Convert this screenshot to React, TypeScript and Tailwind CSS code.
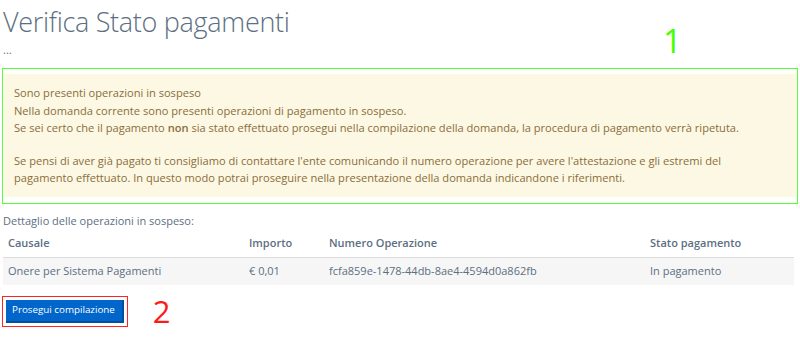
import React from 'react';

const rows = [
  {
    causale: 'Onere per Sistema Pagamenti',
    importo: '€ 0,01',
    numero: 'fcfa859e-1478-44db-8ae4-4594d0a862fb',
    stato: 'In pagamento',
  },
];

const App: React.FC = () => {
  return (
    <div className="relative w-[800px] h-[347px] bg-white font-['Open_Sans',sans-serif] text-[#5c6f82] overflow-hidden">
      {/* annotation 1 */}
      <span className="absolute left-[663px] top-[24px] text-[33px] leading-none text-[#44ff00]">1</span>

      <div className="pt-[4px] pl-[3px]">
        <h1 className="text-[27px] font-light tracking-[-0.3px] leading-[36px] text-[#5c6f82]">Verifica Stato pagamenti</h1>
        <p className="text-[11px] leading-[14px] mt-[3px]">...</p>
      </div>

      {/* Alert with annotation frame */}
      <div className="ml-[2px] mr-[2px] mt-[11px] border-[1.5px] border-[#55ff33] pt-[5px] pb-[6px] pl-[1px] pr-[1px]">
        <div className="bg-[#fcf8e3] pl-[10px] pr-[22px] pt-[10px] pb-[10px] text-[11.1px] leading-[17.5px] text-[#8a6d3b]">
          <p>Sono presenti operazioni in sospeso</p>
          <p>Nella domanda corrente sono presenti operazioni di pagamento in sospeso.</p>
          <p>
            Se sei certo che il pagamento <b className="font-semibold">non</b> sia stato effettuato prosegui nella compilazione della domanda, la procedura di pagamento verrà ripetuta.
          </p>
          <p className="mt-[15px]">
            Se pensi di aver già pagato ti consigliamo di contattare l'ente comunicando il numero operazione per avere l'attestazione e gli estremi del pagamento effettuato. In questo modo potrai proseguire nella presentazione della domanda indicandone i riferimenti.
          </p>
        </div>
      </div>

      <div className="pl-[3px] pr-[6px] mt-[8px]">
        <p className="text-[11px] leading-[17px]">Dettaglio delle operazioni in sospeso:</p>
        <table className="w-full text-[11px] border-collapse">
          <thead>
            <tr className="border-b border-[#dcdcdc]">
              <th className="text-left font-semibold h-[29px] pl-[5px] w-[246px]">Causale</th>
              <th className="text-left font-semibold w-[80px]">Importo</th>
              <th className="text-left font-semibold w-[321px]">Numero Operazione</th>
              <th className="text-left font-semibold">Stato pagamento</th>
            </tr>
          </thead>
          <tbody>
            {rows.map((r) => (
              <tr key={r.numero} className="bg-[#f6f6f6]">
                <td className="h-[27px] pl-[5px]">{r.causale}</td>
                <td>{r.importo}</td>
                <td>{r.numero}</td>
                <td>{r.stato}</td>
              </tr>
            ))}
          </tbody>
        </table>
      </div>

      <div className="flex items-center mt-[11px] ml-[2px]">
        <div className="border border-[#ff2222] p-[3px]">
          <button className="h-[23px] pl-[6px] pr-[7px] bg-[#0066cc] text-white text-[9.8px] border-b-2 border-r-2 border-[#00509e] flex items-center">
            Prosegui compilazione
          </button>
        </div>
        <span className="ml-[25px] text-[31px] leading-none text-[#ff1a1a]">2</span>
      </div>
    </div>
  );
};

export default App;
